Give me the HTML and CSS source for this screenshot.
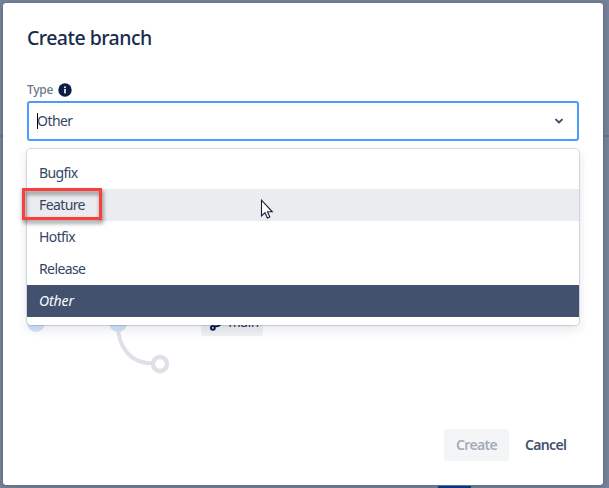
FILE: index.html
```html
<!DOCTYPE html>
<html lang="en">
<head>
<meta charset="utf-8">
<title>Create branch</title>
<link rel="stylesheet" href="styles.css">
</head>
<body>
<div class="page-rule"></div>
<div class="page-button"></div>
<main class="dialog">
  <h1 class="title">Create branch</h1>
  <div class="label"><span class="label-text">Type</span>
    <svg class="info" width="14" height="14" viewBox="0 0 14 14"><circle cx="7" cy="7" r="6.7" fill="#091e42"/><rect x="6.2" y="6" width="1.6" height="4.4" fill="#fff"/><circle cx="7" cy="4.2" r=".95" fill="#fff"/></svg>
  </div>
  <div class="select">
    <span class="caret"></span><span class="value">Other</span>
    <svg class="chevron" width="10" height="8" viewBox="0 0 10 8"><path d="M2 2.6 5 5.5 8 2.6" fill="none" stroke="#42526e" stroke-width="2" stroke-linecap="round" stroke-linejoin="round"/></svg>
    <ul class="menu">
      <li class="item">Bugfix</li>
      <li class="item hover">Feature</li>
      <li class="item">Hotfix</li>
      <li class="item">Release</li>
      <li class="item selected">Other</li>
    </ul>
    <div class="highlight"></div>
    <svg class="pointer" width="14" height="22" viewBox="0 0 14 22"><path d="M1.5 1.2V17L5 13.7 7.4 19 9.8 18 7.5 12.8H12.3Z" fill="#fff" stroke="#172033" stroke-width="1.1"/></svg>
  </div>
  <div class="preview">
    <svg class="graph" width="150" height="66" viewBox="0 0 150 66"><path d="M91 17C91 40 104 55.5 126 55.5" fill="none" stroke="#dfe1e6" stroke-width="4"/><circle cx="9" cy="15" r="9" fill="#d3e3fa"/><circle cx="91" cy="15" r="9" fill="#d3e3fa"/><circle cx="133" cy="56" r="7" fill="#fff" stroke="#dfe1e6" stroke-width="4.4"/></svg>
    <div class="tag"><svg class="branch-icon" width="14" height="18" viewBox="0 0 14 18"><g fill="none" stroke="#091e42" stroke-width="2"><circle cx="4" cy="14" r="2"/><circle cx="12" cy="5" r="2"/><path d="M6 12.6 9 12.2Q12 12 12 7"/></g></svg><span class="tag-text">main</span></div>
  </div>
  <div class="actions">
    <button class="button create" disabled>Create</button>
    <button class="button cancel">Cancel</button>
  </div>
</main>
</body>
</html>
```
FILE: styles.css
```css
* { box-sizing: border-box; }
body {
  margin: 0;
  width: 609px;
  height: 488px;
  padding: 3px;
  overflow: hidden;
  background: #758199;
  color: #344563;
  font: 14px/20px "Noto Sans", "Open Sans", sans-serif;
}
.page-rule { position: absolute; left: 0; top: 135px; width: 609px; height: 2px; background: #68748e; }
.page-button { position: absolute; left: 438px; top: 486px; width: 33px; height: 2px; background: #0b3a87; }
.dialog {
  position: relative;
  width: 600px;
  height: 482px;
  padding: 24px;
  border-radius: 3px;
  background: #fff;
  box-shadow: 0 0 1px #4c5a75, 0 1px 5px rgba(9, 30, 66, .25);
}
.title { margin: 0; height: 24px; color: #172b4d; font-size: 19.5px; line-height: 21px; font-weight: 500; letter-spacing: -.52px; }
.label { display: flex; align-items: center; gap: 5px; height: 22px; margin-top: 28px; font-size: 12px; color: #6b778c; }
.label-text { font-weight: 500; letter-spacing: -.25px; }
.info { margin-bottom: 1px; }
.select {
  position: relative;
  display: flex;
  align-items: center;
  height: 40px;
  padding: 0 13px 0 8px;
  border: 2px solid #4c9aff;
  border-radius: 3px;
}
.caret { width: 1px; height: 16px; background: #000; }
.value { margin-left: -1px; letter-spacing: -.55px; }
.chevron { margin-left: auto; }
.menu {
  position: absolute;
  z-index: 2;
  left: -2px;
  top: 46px;
  width: 552px;
  height: 176px;
  margin: 0;
  padding: 8px 0;
  list-style: none;
  border-radius: 4px;
  background: #fff;
  box-shadow: 0 0 0 1px rgba(9, 30, 66, .14), 0 4px 11px rgba(9, 30, 66, .12);
}
.item { height: 32px; padding: 6px 12px; letter-spacing: -.6px; }
.hover { background: #ebecf0; }
.selected { background: #42526e; color: #fff; font-style: italic; letter-spacing: -.1px; }
.highlight {
  position: absolute;
  z-index: 3;
  left: -7px;
  top: 85px;
  width: 80px;
  height: 32px;
  border: 3px solid #fa3e3e;
  filter: drop-shadow(1px 3px 2px rgba(0, 0, 0, .5));
}
.pointer { position: absolute; z-index: 4; left: 231px; top: 96px; }
.preview { display: flex; height: 66px; margin-top: 167px; gap: 24px; }
.tag {
  display: flex;
  align-items: flex-start;
  width: 62px;
  height: 24px;
  margin-top: 4px;
  padding: 2px 4px 0 8px;
  gap: 6px;
  border-radius: 3px;
  background: #f0f1f3;
  color: #172b4d;
}
.tag-text { font-size: 13px; line-height: 16px; letter-spacing: -.1px; }
.actions { display: flex; justify-content: flex-end; gap: 4px; margin-top: 55px; }
.button {
  height: 32px;
  padding: 0 12px;
  border: 0;
  border-radius: 3px;
  background: transparent;
  color: #42526e;
  font: 600 14px/32px "Noto Sans", sans-serif;
  letter-spacing: -.65px;
  text-align: left;
}
.create { width: 65px; background: #f4f5f7; color: #a5adba; }
.cancel { width: 66px; }
```
